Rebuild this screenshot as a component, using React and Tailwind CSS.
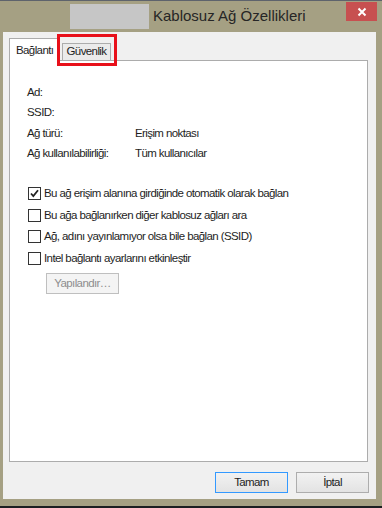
const font = { fontFamily: '"Liberation Sans", Arial, sans-serif' };

function Checkbox({ checked, label }) {
    return (
        <div className="flex items-center h-[21.5px]">
            <div className="w-[13px] h-[13px] border border-[#333333] bg-white flex items-center justify-center">
                {checked && (
                    <svg width="9" height="9" viewBox="0 0 9 9">
                        <path d="M1 4.5 L3.3 7 L8 1.2" stroke="#222" strokeWidth="1.8" fill="none" />
                    </svg>
                )}
            </div>
            <span className="ml-[3px]">{label}</span>
        </div>
    );
}

function Row({ label, value }) {
    return (
        <div className="flex items-center h-[20.5px]">
            <span className="w-[108px]">{label}</span>
            <span>{value}</span>
        </div>
    );
}

export default function App() {
    return (
        <div className="w-[382px] h-[508px] bg-[#a5a083] flex flex-col overflow-hidden" style={font}>
            <div className="h-px bg-[#5e636c]" />
            <div className="h-[31px] flex items-start relative">
                <div className="ml-[70px] mt-[3px] w-[79px] h-[25px] bg-[#c6c6c6]" />
                <span className="ml-[4px] mt-[5px] text-[15px] text-[#262626] leading-[20px]">Kablosuz Ağ Özellikleri</span>
                <div className="ml-auto mr-[5px] mt-[1px] w-[31px] h-[19px] bg-[#c75050] flex items-center justify-center">
                    <svg width="10" height="10" viewBox="0 0 10 10">
                        <path d="M1.5 1.5 L8.5 8.5 M8.5 1.5 L1.5 8.5" stroke="white" strokeWidth="2" />
                    </svg>
                </div>
            </div>
            <div className="ml-[3px] mr-[6px] h-[467px] bg-[#f0f0f0] flex flex-col text-[11.5px] tracking-[-0.6px] text-[#1e1e1e]">
                <div className="flex items-end h-[28px] pl-[6px] relative">
                    <div className="w-[49px] h-[23px] bg-white border border-b-0 border-[#acacac] -mb-px relative z-10 flex items-start pl-[6px] pt-[3px]">
                        Bağlantı
                    </div>
                    <div className="ml-[4px] w-[49px] h-[17px] bg-[#ebebeb] border border-b-0 border-[#acacac] flex items-center justify-center">
                        Güvenlik
                    </div>
                    <div className="absolute left-[54px] top-[2px] w-[60px] h-[32px] border-[3px] border-[#e8101a] z-20" />
                </div>
                <div className="ml-[6px] mr-[8px] h-[402px] bg-white border border-[#acacac] pt-[21px] pl-[17px]">
                    <Row label="Ad:" value="" />
                    <Row label="SSID:" value="" />
                    <Row label="Ağ türü:" value="Erişim noktası" />
                    <Row label="Ağ kullanılabilirliği:" value="Tüm kullanıcılar" />
                    <div className="mt-[19px] ml-px">
                        <Checkbox checked label="Bu ağ erişim alanına girdiğinde otomatik olarak bağlan" />
                        <Checkbox label="Bu ağa bağlanırken diğer kablosuz ağları ara" />
                        <Checkbox label="Ağ, adını yayınlamıyor olsa bile bağlan (SSID)" />
                        <Checkbox label="Intel bağlantı ayarlarını etkinleştir" />
                    </div>
                    <div className="ml-[19px] mt-[4px] w-[73px] h-[21px] border border-[#bfbfbf] bg-[#f4f4f4] flex items-center justify-center text-[#8d8d8d]">
                        Yapılandır…
                    </div>
                </div>
                <div className="flex justify-end gap-[8px] mt-[10px] mr-[7px]">
                    <div className="w-[73px] h-[21px] border border-[#3399ff] bg-gradient-to-b from-[#f2f2f2] to-[#e3e3e3] flex items-center justify-center">
                        Tamam
                    </div>
                    <div className="w-[73px] h-[21px] border border-[#adadad] bg-gradient-to-b from-[#f2f2f2] to-[#e3e3e3] flex items-center justify-center">
                        İptal
                    </div>
                </div>
            </div>
            <div className="flex-1" />
            <div className="h-[2px] bg-[#1c1f22]" />
        </div>
    );
}
